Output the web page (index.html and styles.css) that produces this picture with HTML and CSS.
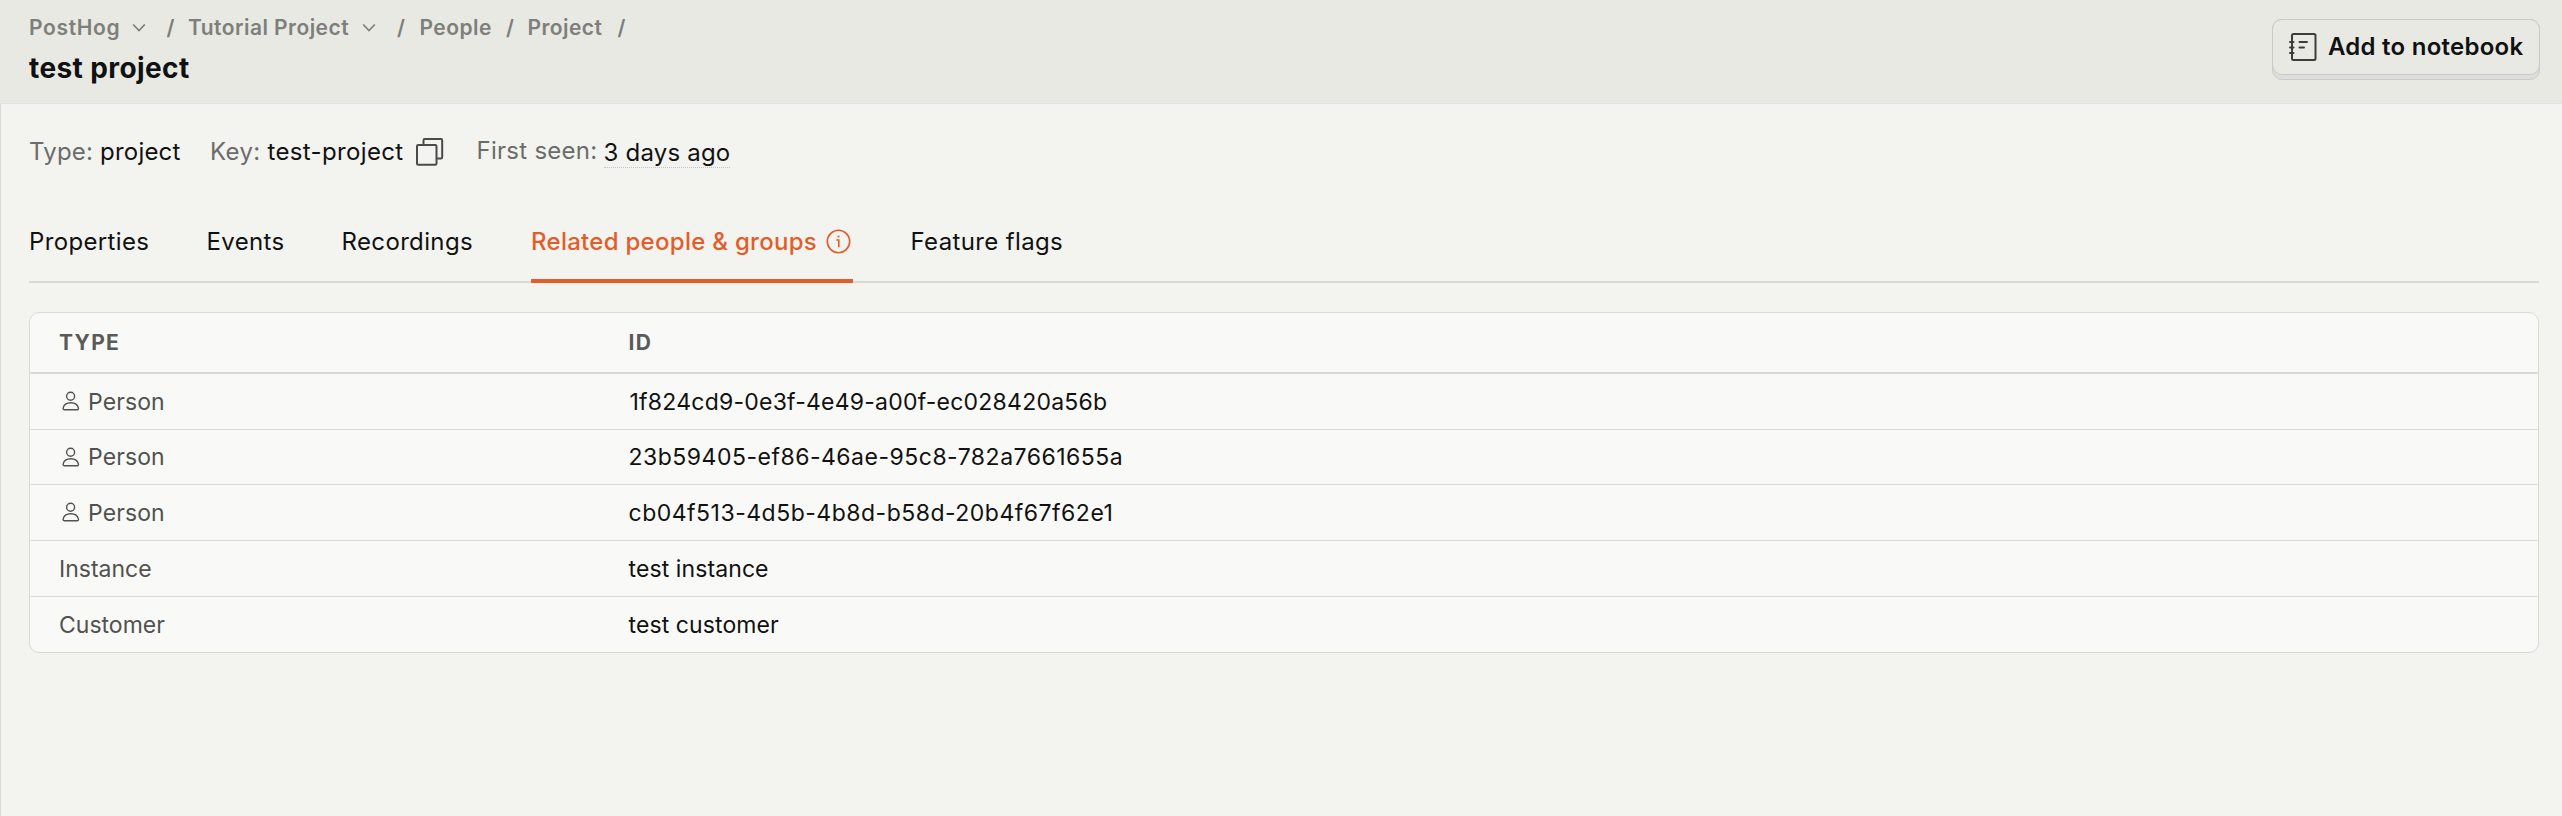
FILE: index.html
```
<!DOCTYPE html>
<html lang="en">
<head>
<meta charset="utf-8">
<title>test project</title>
<link rel="stylesheet" href="styles.css">
</head>
<body>
<svg width="0" height="0" class="defs">
  <symbol id="chevron" viewBox="0 0 14 10"><path d="M1.2 1.5 7 7.6l5.8-6.100" fill="none" stroke="currentColor" stroke-width="1.700"/></symbol>
  <symbol id="person" viewBox="0 0 18 21"><g fill="none" stroke="currentColor" stroke-width="1.400"><circle cx="8.600" cy="5.200" r="4"/><path d="M2.400 18.700c-.9 0-1.400-.6-1.300-1.400C1.700 13.700 4.800 11.700 8.800 11.700s7 2 7.700 5.600c.1.800-.4 1.400-1.300 1.400z"/></g></symbol>
</svg>
<header class="top">
  <div class="top-left">
    <nav class="crumbs">
      <span class="wide">PostHog</span>
      <svg class="chevron"><use href="#chevron"/></svg>
      <span>/</span>
      <span>Tutorial Project</span>
      <svg class="chevron"><use href="#chevron"/></svg>
      <span>/</span>
      <span>People</span>
      <span>/</span>
      <span>Project</span>
      <span>/</span>
    </nav>
    <h1 class="title">test project</h1>
  </div>
  <button class="notebook">
    <span class="face">
      <svg class="notebook-icon" viewBox="0 0 28 30"><g fill="none" stroke="currentColor" stroke-width="2"><rect x="3" y="2" width="23.500" height="26" rx="1.500"/><path d="M1 10h3.500M1 15.500h3.500M1 21h3.500M10.500 10h7.500M10.500 15.500h4.500" stroke-linecap="round"/></g></svg>
      <span>Add to notebook</span>
    </span>
  </button>
</header>
<main class="page">
  <div class="props">
    <div class="prop type"><span class="label">Type:</span><span>project</span></div>
    <div class="prop key"><span class="label">Key:</span><span>test-project</span>
      <svg class="copy" viewBox="0 0 28 30"><g fill="none" stroke="currentColor" stroke-width="2"><path d="M7.500 8V3.200c0-.7.500-1.200 1.200-1.200H25c.7 0 1.200.5 1.200 1.200v17c0 .7-.5 1.200-1.200 1.200h-4.300"/><rect x="1" y="8" width="19.500" height="19.800" rx="1.200"/></g></svg>
    </div>
    <div class="prop seen"><span class="label">First seen:</span><span class="date">3 days ago</span></div>
  </div>
  <div class="tabs">
    <div class="tab properties">Properties</div>
    <div class="tab events">Events</div>
    <div class="tab recordings">Recordings</div>
    <div class="tab active">Related people &amp; groups
      <svg class="info" viewBox="0 0 25 25"><circle cx="12.500" cy="12.500" r="11.200" fill="none" stroke="currentColor" stroke-width="1.600"/><circle cx="12.500" cy="7.500" r="1.100" fill="currentColor"/><path d="M10.300 11h2.500v7.200" fill="none" stroke="currentColor" stroke-width="1.600"/></svg>
    </div>
    <div class="tab">Feature flags</div>
  </div>
  <div class="table">
    <div class="row head"><span>TYPE</span><span>ID</span></div>
    <div class="row"><span class="kind person"><svg class="person-icon"><use href="#person"/></svg>Person</span><span class="id first">1f824cd9-0e3f-4e49-a00f-ec028420a56b</span></div>
    <div class="row short"><span class="kind person"><svg class="person-icon"><use href="#person"/></svg>Person</span><span class="id">23b59405-ef86-46ae-95c8-782a7661655a</span></div>
    <div class="row"><span class="kind person"><svg class="person-icon"><use href="#person"/></svg>Person</span><span class="id">cb04f513-4d5b-4b8d-b58d-20b4f67f62e1</span></div>
    <div class="row"><span class="kind">Instance</span><span class="name">test instance</span></div>
    <div class="row last"><span class="kind">Customer</span><span class="name">test customer</span></div>
  </div>
</main>
</body>
</html>
```
FILE: styles.css
```
* { box-sizing: border-box; }
body {
  margin: 0;
  min-height: 816px;
  display: flex;
  flex-direction: column;
  background: #f3f4ef;
  color: #111;
  font: 24px/32px Inter, "Liberation Sans", sans-serif;
  white-space: nowrap;
}
svg { display: block; flex: none; }
.defs { position: absolute; }

.top {
  height: 104px;
  padding: 14px 22px 0 29px;
  display: flex;
  justify-content: space-between;
  background: #e8e9e3;
  border-bottom: 1px solid #e2e3dd;
}
.crumbs {
  display: grid;
  grid-template-columns: 103px 34.500px 21.500px 174px 35px 22.500px 86.500px 21.500px 90px auto;
  height: 28px;
  align-items: center;
  font-size: 21px;
  line-height: 28px;
  font-weight: 600;
  letter-spacing: .45px;
  color: #7e7f7b;
}
.crumbs .wide { letter-spacing: .65px; }
.chevron { width: 14px; height: 10px; }
.title {
  margin: 8px 0 0;
  font-size: 28px;
  line-height: 36px;
  font-weight: 700;
  letter-spacing: .4px;
}
.notebook {
  width: 268px;
  height: 61px;
  margin-top: 5px;
  padding: 0;
  border: 1px solid #c9cac9;
  border-radius: 10px;
  background: #dedfdc;
  color: #111;
  font: 600 24px/32px Inter, "Liberation Sans", sans-serif;
  letter-spacing: .25px;
}
.face {
  height: 56px;
  margin: -1px -1px 4px;
  padding-left: 16px;
  display: flex;
  align-items: center;
  gap: 11px;
  border: 1px solid #c9cac9;
  border-radius: 10px;
  background: #e8e9e3;
}
.notebook-icon { width: 28px; height: 30px; color: #3c3d3a; }

.page {
  flex: 1;
  padding: 32px 23px 0 28px;
  border-left: 1px solid #d9dad2;
}
.props { display: flex; height: 32px; }
.prop { display: flex; }
.prop .label { color: #6b6c69; }
.type { width: 181px; gap: 7px; letter-spacing: .2px; }
.key { width: 266.500px; gap: 7px; letter-spacing: .35px; }
.copy { width: 28px; height: 30px; margin: 1px 0 0 5px; color: #4a4b48; }
.seen { gap: 6px; letter-spacing: .2px; }
.seen .label { margin-top: -1px; letter-spacing: .27px; }
.date { height: 31px; margin-top: 1px; border-bottom: 1px dotted #c4c5bf; line-height: 32px; }

.tabs {
  height: 57px;
  margin-top: 58px;
  display: flex;
  border-bottom: 2px solid #d9dad2;
  letter-spacing: .36px;
}
.tab { height: 57px; }
.properties { width: 177.500px; }
.events { width: 135px; }
.recordings { width: 189.500px; }
.active {
  width: 322px;
  margin-right: 57.500px;
  display: flex;
  gap: 9px;
  border-bottom: 4px solid #e55c2b;
  color: #e55c2b;
  font-weight: 500;
  letter-spacing: .28px;
}
.info { width: 25px; height: 25px; margin-top: 3px; }

.table {
  margin-top: 29px;
  border: 1px solid #d9dad2;
  border-radius: 10px;
  background: #f9faf7;
  font-size: 23px;
}
.row {
  height: 56px;
  padding-left: 29px;
  display: grid;
  grid-template-columns: 569.500px 1fr;
  align-items: center;
  border-bottom: 1px solid #d9dad2;
}
.head {
  height: 61px;
  border-bottom-width: 2px;
  font-size: 21px;
  font-weight: 700;
  letter-spacing: 1.300px;
  color: #5a5b58;
}
.short { height: 55px; }
.last { height: 55px; border-bottom: 0; }
.kind { color: #51524f; }
.person { display: flex; align-items: center; padding-left: 3px; gap: 8px; letter-spacing: .1px; }
.person-icon { width: 18px; height: 21px; }
.id { letter-spacing: .5px; }
.first { padding-left: 1px; letter-spacing: .23px; }
.name { letter-spacing: .1px; }
```
